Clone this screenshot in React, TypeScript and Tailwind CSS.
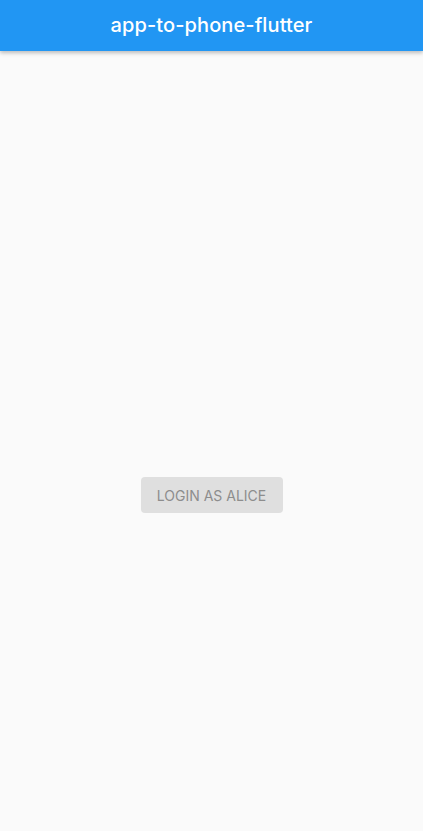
export default function App() {
  return (
    <div
      className="flex min-h-[831px] w-full flex-col bg-[#fafafa]"
      style={{ fontFamily: 'Inter, "Noto Sans", sans-serif' }}
    >
      {/* App bar */}
      <header className="relative z-10 flex h-[51px] items-center justify-center bg-[#2196f3] shadow-[0_2px_4px_rgba(0,0,0,0.25)]">
        <h1 className="pb-[1px] text-[20px] font-medium tracking-[0.1px] text-white">
          app-to-phone-flutter
        </h1>
      </header>

      {/* Body */}
      <main className="flex flex-1 flex-col items-center pt-[426px]">
        <button
          type="button"
          className="h-[36px] w-[142px] rounded-[4px] bg-[#dfdfdf] text-[14px] font-normal uppercase text-[#8d8d8d]"
        >
          Login as Alice
        </button>
      </main>
    </div>
  );
}
